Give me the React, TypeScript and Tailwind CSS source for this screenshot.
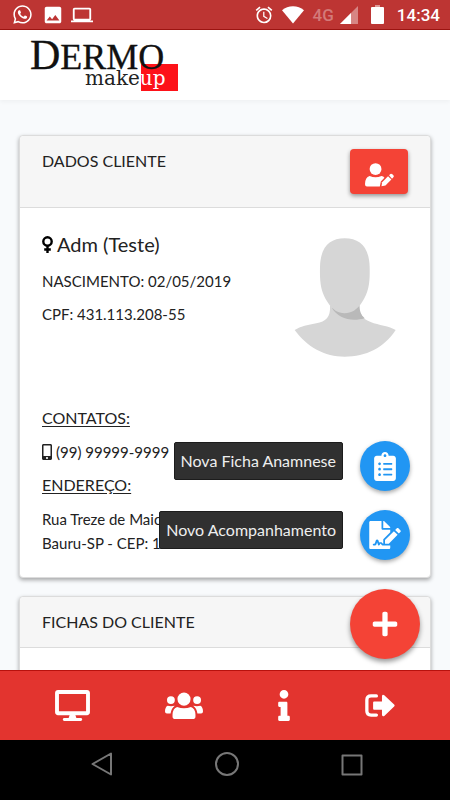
import React from 'react';
import { FaClipboardList, FaDesktop, FaFileSignature, FaInfo, FaMobileAlt, FaPlus, FaWhatsapp } from 'react-icons/fa';
import { MdAlarm, MdImage, MdLaptop } from 'react-icons/md';

const client = {
  name: 'Adm (Teste)',
  birth: '02/05/2019',
  cpf: '431.113.208-55',
  phone: '(99) 99999-9999',
  street: 'Rua Treze de Maio',
  city: 'Bauru-SP - CEP: 1',
};

const navItems = [
  { label: 'Painel', icon: <FaDesktop className="w-[35px] h-[31px]" /> },
  { label: 'Clientes', icon: <UsersIcon /> },
  { label: 'Sobre', icon: <FaInfo className="w-[12px] h-[31px]" /> },
  { label: 'Sair', icon: <SignOutIcon /> },
];

const quickActions = [
  { label: 'Nova Ficha Anamnese', icon: <FaClipboardList className="w-[22px] h-[29px]" /> },
  { label: 'Novo Acompanhamento', icon: <FaFileSignature className="w-[32px] h-[28px]" /> },
];

function UsersIcon() {
  return (
    <svg viewBox="0 0 116 84" className="w-[38px] h-[28px]" fill="currentColor">
      <circle cx="58" cy="21" r="20" />
      <circle cx="18" cy="24" r="12" />
      <circle cx="98" cy="24" r="12" />
      <path d="M37 45Q58 53 79 45Q92 49 93 68V74Q93 82 84 82H32Q23 82 23 74V68Q24 49 37 45z" />
      <path d="M8 41Q18 44 30 41Q19 49 17 65H6Q0 65 0 59Q0 45 8 41z" />
      <path d="M108 41Q98 44 86 41Q97 49 99 65H110Q116 65 116 59Q116 45 108 41z" />
    </svg>
  );
}

function UserEditIcon() {
  return (
    <svg viewBox="0 0 88 72" className="w-[29px] h-[24px]" fill="currentColor">
      <circle cx="32" cy="18" r="18" />
      <path d="M14 39Q32 47 50 39Q56 40 59 44L48 56L45 71H6Q0 71 0 64Q0 43 14 39z" />
      <path d="M50 70L52 58L70 40L80 50L62 68z" />
      <path d="M73 37L77 33Q80 31 83 34L86 37Q89 40 86 43L82 47z" />
    </svg>
  );
}

function SignOutIcon() {
  return (
    <svg viewBox="0 0 90 70" className="w-[30px] h-[23px]" fill="currentColor">
      <path d="M34 6H18Q5 6 5 18V52Q5 64 18 64H34" fill="none" stroke="currentColor" strokeWidth="10" strokeLinecap="round" />
      <path d="M27 23H51V7Q52 0 58 4L88 32Q91 35 88 38L58 67Q52 70 51 63V48H27Q24 48 24 45V26Q24 23 27 23z" />
    </svg>
  );
}

function FemaleIcon() {
  return (
    <svg viewBox="0 0 11 17" className="w-[11px] h-[17px]" fill="none" stroke="#000" strokeWidth="2.4">
      <circle cx="5.500" cy="5.500" r="4.200" />
      <path d="M5.500 9.500V17M2.200 13.500H8.800" />
    </svg>
  );
}

function StatusBar() {
  return (
    <div className="shrink-0 h-[30px] bg-[#bd3533] border-b border-[#9c1512] text-white flex items-center justify-between pl-[12px] pr-[10px]">
      <div className="flex items-center gap-[10px]">
        <FaWhatsapp className="w-[21px] h-[21px]" />
        <MdImage className="w-[22px] h-[22px] -ml-px" />
        <MdLaptop className="w-[22px] h-[22px] -ml-[3px]" />
      </div>
      <div className="flex items-center">
        <MdAlarm className="w-[20px] h-[20px] mr-[8px]" />
        <svg viewBox="0 0 22 18" className="w-[22px] h-[18px] mr-[9px]" fill="currentColor">
          <path d="M0 4.200C6-1.200 16-1.200 22 4.200L11 17.500z" />
        </svg>
        <span className="self-start text-[17px] leading-[22px] font-medium text-white/35 mr-[6px] font-['Roboto',sans-serif]">4G</span>
        <svg viewBox="0 0 18 18" className="w-[18px] h-[18px] mr-[13px]" fill="currentColor">
          <path d="M18 0v18H0z" opacity="0.4" />
          <path d="M11 7v11H0z" />
        </svg>
        <svg viewBox="0 0 13 19" className="w-[13px] h-[19px] mr-[13px]" fill="currentColor">
          <path d="M4 0h5v2H4z" opacity="0.5" />
          <rect y="2" width="13" height="17" rx="1" />
        </svg>
        <span className="text-[17px] leading-5 font-medium font-['Roboto',sans-serif]">14:34</span>
      </div>
    </div>
  );
}

function Logo() {
  return (
    <svg viewBox="0 0 152 60" className="w-[152px] h-[60px] overflow-visible" role="img" aria-label="Dermo makeup">
      <rect x="111" y="32" width="37" height="27" fill="#fd1219" />
      <text x="0" y="37" fontSize="42" fontFamily="Liberation Serif, serif" fill="#111" stroke="#111" strokeWidth="0.3">
        D<tspan fontSize="36">ERMO</tspan>
      </text>
      <text x="55" y="53" fontSize="20" fontFamily="DejaVu Serif, serif" fill="#222">
        make<tspan fill="#fff">up</tspan>
      </text>
    </svg>
  );
}

function Avatar() {
  return (
    <svg viewBox="208 352 306 357" className="w-[102px] h-[119px] shrink-0">
      <path
        d="M316 555C318 590 303 602 275 608C250 613 228 617 210 628C247 679 300 708 360 708C424 708 479 681 513 628C494 616 462 614 438 604C414 595 404 580 404 555z"
        fill="#d6d6d6"
      />
      <path d="M322 563C340 592 378 605 420 593C409 584 404 570 404 552z" fill="#b9b9b9" />
      <path
        d="M360 353C406 353 434 380 435 440C436 485 433 512 412 545C397 568 380 578 360 578C340 578 324 568 309 545C288 512 285 485 286 440C287 380 314 353 360 353z"
        fill="#d6d6d6"
      />
    </svg>
  );
}

function Card({ title, action, children }: { title: string; action?: React.ReactNode; children?: React.ReactNode }) {
  return (
    <section className="bg-white rounded border border-[#dcdcdc] shadow-[0_2px_4px_rgba(0,0,0,0.35)]">
      <header className="bg-[#f6f6f6] rounded-t border-b border-[#dcdcdc] px-[22px] py-[13px] flex items-start justify-between">
        <h2 className="text-base leading-6">{title}</h2>
        {action}
      </header>
      {children}
    </section>
  );
}

export default function App() {
  return (
    <div className="h-screen flex flex-col overflow-hidden bg-[#f8fafc] text-[#222] font-['Lato','Open_Sans',sans-serif]">
      <StatusBar />

      <header className="shrink-0 h-[70px] bg-white shadow-[0_2px_4px_rgba(0,0,0,0.04)] pl-[30px] pt-[2px]">
        <Logo />
      </header>

      <div className="relative flex-1 min-h-0">
        <main className="h-full overflow-hidden px-[19px] pt-[35px] flex flex-col gap-[18px]">
          <Card
            title="DADOS CLIENTE"
            action={
              <button
                aria-label="Editar cliente"
                className="w-[58px] h-[45px] rounded bg-[#f44336] text-white flex items-center justify-center pt-[6px] shadow-[0_2px_4px_rgba(0,0,0,0.4)]"
              >
                <UserEditIcon />
              </button>
            }
          >
            <div className="px-[22px] pt-6 pb-[22px]">
              <div className="flex justify-between min-h-[174px]">
                <div>
                  <h3 className="text-xl leading-6 mb-[13px] flex items-center gap-1">
                    <FemaleIcon />
                    {client.name}
                  </h3>
                  <p className="text-[15px] leading-6 mb-[9px]">NASCIMENTO: {client.birth}</p>
                  <p className="text-[15px] leading-6">CPF: {client.cpf}</p>
                </div>
                <div className="pt-[6px] pr-3">
                  <Avatar />
                </div>
              </div>

              <h4 className="text-base leading-6 underline underline-offset-2 mb-[10px]">CONTATOS:</h4>
              <p className="text-[15px] leading-6 mb-[9px] flex items-center gap-1">
                <FaMobileAlt className="w-[10px] h-[16px]" />
                {client.phone}
              </p>
              <h4 className="text-base leading-6 underline underline-offset-2 mb-[10px]">ENDEREÇO:</h4>
              <p className="text-[15px] leading-6">
                {client.street}
                <br />
                {client.city}
              </p>
            </div>
          </Card>

          <Card title="FICHAS DO CLIENTE">
            <div className="h-24" />
          </Card>
        </main>

        {/* Floating actions */}
        <div className="absolute right-[30px] bottom-[11px] flex flex-col items-end">
          {quickActions.map((action) => (
            <div key={action.label} className="flex items-center gap-[17px] mr-[10px] mb-[19px]">
              <span className="h-[38px] px-[6px] rounded-xs bg-[#303030] border border-[#1c1c1c] text-[#eee] text-base leading-9 mb-[10px]">
                {action.label}
              </span>
              <button
                aria-label={action.label}
                className="w-[50px] h-[50px] rounded-full bg-[#2196f3] text-white flex items-center justify-center shadow-[0_2px_4px_rgba(0,0,0,0.35)]"
              >
                {action.icon}
              </button>
            </div>
          ))}
          <button
            aria-label="Adicionar"
            className="w-[70px] h-[70px] mt-[10px] rounded-full bg-[#f44336] text-white flex items-center justify-center shadow-[0_3px_5px_rgba(0,0,0,0.4)]"
          >
            <FaPlus className="w-[28px] h-[28px]" />
          </button>
        </div>
      </div>

      <nav className="relative shrink-0 h-[70px] bg-[#e3342f] border-t border-[#b8110d] text-white flex items-center justify-center gap-[75px]">
        {navItems.map((item) => (
          <a key={item.label} href="#" aria-label={item.label}>
            {item.icon}
          </a>
        ))}
      </nav>

      {/* Android navigation */}
      <div className="shrink-0 h-[60px] bg-black flex items-center justify-center gap-[102px] pb-3 pl-1">
        <svg viewBox="0 0 22 24" className="w-[22px] h-[24px]" fill="none" stroke="#777" strokeWidth="2" strokeLinejoin="round">
          <path d="M20 1.500v21L1.500 12z" />
        </svg>
        <svg viewBox="0 0 24 24" className="w-[24px] h-[24px]" fill="none" stroke="#777" strokeWidth="2">
          <circle cx="12" cy="12" r="11" />
        </svg>
        <svg viewBox="0 0 22 24" className="w-[22px] h-[24px]" fill="none" stroke="#777" strokeWidth="2" strokeLinejoin="round">
          <rect x="1.500" y="3.500" width="19" height="19" />
        </svg>
      </div>
    </div>
  );
}
